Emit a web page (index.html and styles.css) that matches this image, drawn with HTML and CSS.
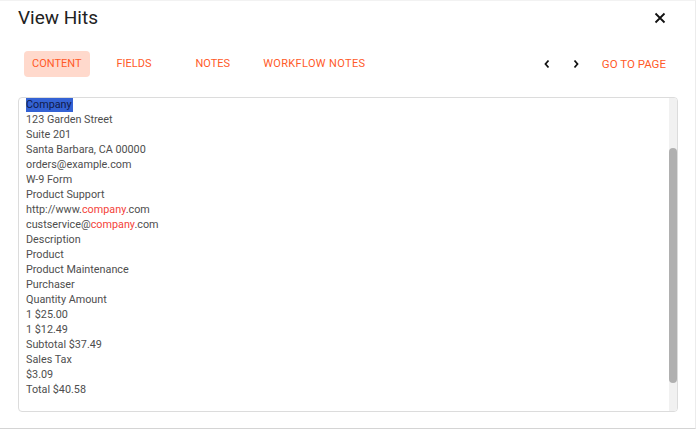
FILE: index.html
```html
<!DOCTYPE html>
<html>
<head>
<meta charset="utf-8">
<link rel="stylesheet" href="styles.css">
</head>
<body>
<div class="dialog">
  <div class="header">
    <h1 class="title">View Hits</h1>
    <button class="close" aria-label="Close">
      <svg width="12" height="12" viewBox="0 0 12 12"><path d="M1.5 1.5L10.5 10.5M10.5 1.5L1.5 10.5" stroke="#111" stroke-width="1.8" fill="none"/></svg>
    </button>
  </div>
  <div class="toolbar">
    <div class="tabs">
      <span class="tab active">CONTENT</span>
      <span class="tab tab-fields">FIELDS</span>
      <span class="tab tab-notes">NOTES</span>
      <span class="tab tab-wf">WORKFLOW NOTES</span>
    </div>
    <div class="pager">
      <span class="chev"><svg width="8" height="10" viewBox="0 0 8 10"><path d="M5.5 1.5L2.5 5l3 3.5" stroke="#111" stroke-width="1.8" fill="none"/></svg></span>
      <span class="chev"><svg width="8" height="10" viewBox="0 0 8 10"><path d="M2.5 1.5L5.5 5l-3 3.5" stroke="#111" stroke-width="1.8" fill="none"/></svg></span>
      <span class="goto">GO TO PAGE</span>
    </div>
  </div>
  <div class="content-box">
    <div class="text">
      <div class="line"><span class="sel">Company</span></div>
      <div class="line">123 Garden Street</div>
      <div class="line">Suite 201</div>
      <div class="line">Santa Barbara, CA 00000</div>
      <div class="line">orders@example.com</div>
      <div class="line">W-9 Form</div>
      <div class="line">Product Support</div>
      <div class="line">http://www.<span class="hit">company</span>.com</div>
      <div class="line">custservice@<span class="hit">company</span>.com</div>
      <div class="line">Description</div>
      <div class="line">Product</div>
      <div class="line">Product Maintenance</div>
      <div class="line">Purchaser</div>
      <div class="line">Quantity Amount</div>
      <div class="line">1 $25.00</div>
      <div class="line">1 $12.49</div>
      <div class="line">Subtotal $37.49</div>
      <div class="line">Sales Tax</div>
      <div class="line">$3.09</div>
      <div class="line">Total $40.58</div>
    </div>
    <div class="track"><div class="thumb"></div></div>
  </div>
</div>
</body>
</html>
```
FILE: styles.css
```css
* { box-sizing: border-box; }
html, body { margin: 0; padding: 0; background: #fff; }
body { font-family: Roboto, "Noto Sans", sans-serif; }

.dialog {
  width: 696px;
  height: 429px;
  border-bottom: 1px solid #d4d4d4;
  border-right: 1px solid #ececec;
  border-top: 1px solid #f2f2f2;
  background: #fff;
  display: flex;
  flex-direction: column;
}

.header {
  display: flex;
  align-items: center;
  justify-content: space-between;
  padding: 0 29px 0 18px;
  height: 33px;
}
.title {
  margin: 0;
  font-size: 19px;
  font-weight: 400;
  color: #222;
}
.close {
  border: 0;
  background: none;
  padding: 0;
  width: 12px;
  height: 12px;
  display: flex;
}

.toolbar {
  display: flex;
  justify-content: space-between;
  align-items: flex-start;
  padding: 17px 29px 0 24px;
  height: 63px;
}
.tabs { display: flex; align-items: center; }
.tab {
  font-size: 11px;
  color: #ff5a28;
  height: 26px;
  line-height: 26px;
  padding: 0 8px;
  border-radius: 4px;
}
.tab.active { background: #ffd9cc; margin-right: 19px; }
.tab-fields { margin-right: 28px; }
.tab-notes { margin-right: 17px; }
.tab-wf { letter-spacing: 0.35px; }

.pager { display: flex; align-items: center; height: 26px; }
.chev { display: flex; width: 8px; height: 10px; margin-right: 21px; }
.chev + .chev { margin-right: 22px; }
.goto { font-size: 11.5px; color: #ff5a28; }

.content-box {
  margin: 0 17px 0 18px;
  height: 315px;
  border: 1px solid #dcdcdc;
  border-radius: 4px;
  display: flex;
  overflow: hidden;
}
.text {
  flex: 1;
  padding: 0 0 0 7px;
  font-size: 10.8px;
  color: #4e4e4e;
}
.line { height: 15px; line-height: 15px; white-space: nowrap; }
.line:first-child { margin-top: -1px; }
.sel { background: #3462d4; color: #101a4a; padding: 1px 1px 1px 0; }
.hit { color: #f4433a; }

.track {
  width: 8px;
  background: #f1f1f1;
  display: flex;
  flex-direction: column;
}
.thumb {
  margin-top: 50px;
  height: 235px;
  background: #b0b0b0;
  border-radius: 4px;
}
```
